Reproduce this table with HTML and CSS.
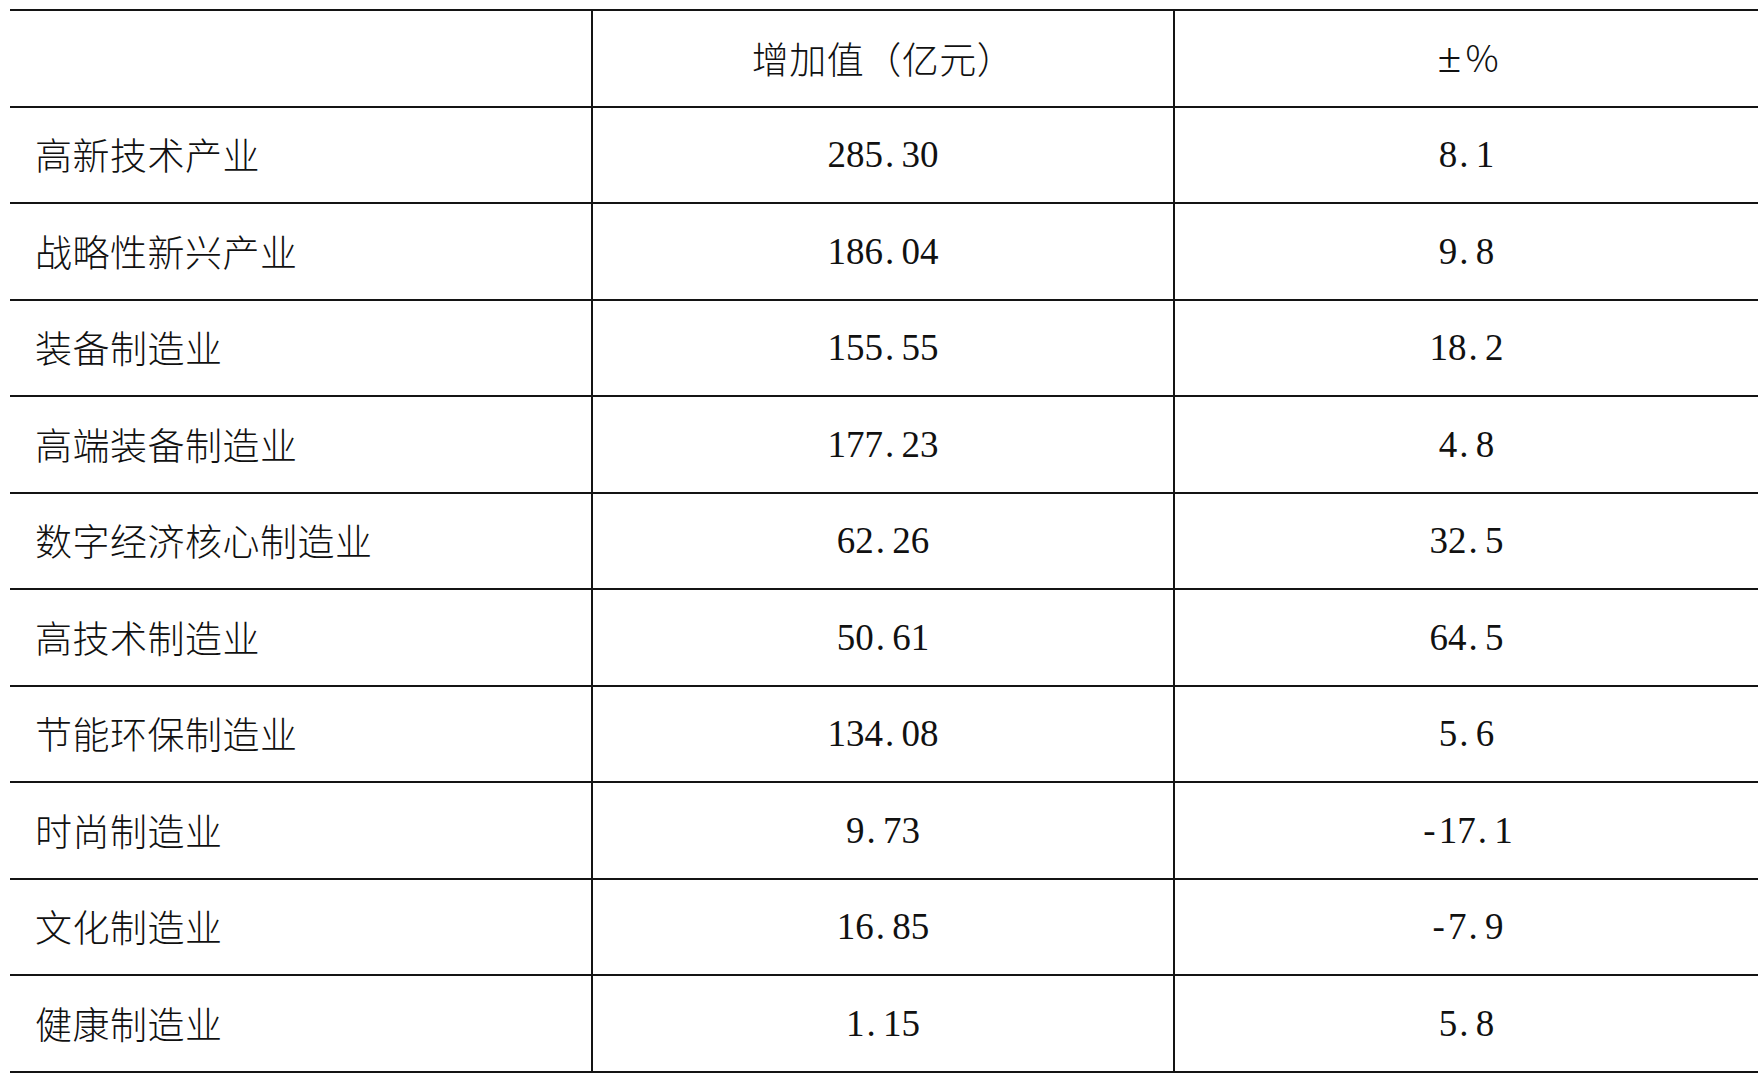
FILE: index.html
```html
<!DOCTYPE html>
<html lang="zh-CN">
<head>
<meta charset="utf-8">
<link rel="stylesheet" href="styles.css">
<title>表</title>
</head>
<body>
<table class="data">
  <thead>
    <tr><th class="name"></th><th>增加值（亿元）</th><th><span class="pm">±</span>%</th></tr>
  </thead>
  <tbody>
    <tr><td class="name">高新技术产业</td><td>285<span class="pt">.</span>30</td><td>8<span class="pt">.</span>1</td></tr>
    <tr><td class="name">战略性新兴产业</td><td>186<span class="pt">.</span>04</td><td>9<span class="pt">.</span>8</td></tr>
    <tr><td class="name">装备制造业</td><td>155<span class="pt">.</span>55</td><td>18<span class="pt">.</span>2</td></tr>
    <tr><td class="name">高端装备制造业</td><td>177<span class="pt">.</span>23</td><td>4<span class="pt">.</span>8</td></tr>
    <tr><td class="name">数字经济核心制造业</td><td>62<span class="pt">.</span>26</td><td>32<span class="pt">.</span>5</td></tr>
    <tr><td class="name">高技术制造业</td><td>50<span class="pt">.</span>61</td><td>64<span class="pt">.</span>5</td></tr>
    <tr><td class="name">节能环保制造业</td><td>134<span class="pt">.</span>08</td><td>5<span class="pt">.</span>6</td></tr>
    <tr><td class="name">时尚制造业</td><td>9<span class="pt">.</span>73</td><td><span class="mn">-</span>17<span class="pt">.</span>1</td></tr>
    <tr><td class="name">文化制造业</td><td>16<span class="pt">.</span>85</td><td><span class="mn">-</span>7<span class="pt">.</span>9</td></tr>
    <tr><td class="name">健康制造业</td><td>1<span class="pt">.</span>15</td><td>5<span class="pt">.</span>8</td></tr>
  </tbody>
</table>
</body>
</html>
```

FILE: styles.css
```css
html, body {
  margin: 0;
  padding: 0;
  background: #ffffff;
}

body {
  padding: 9px 0 0 10px;
  font-family: "Liberation Serif", "Noto Sans CJK SC", serif;
  color: #111111;
}

.data {
  border-collapse: collapse;
  table-layout: fixed;
  width: 1748px;
  font-size: 37px;
  font-weight: 400;
}

.data th,
.data td {
  box-sizing: border-box;
  height: 96.5px;
  padding: 0;
  border-top: 2px solid #141414;
  border-bottom: 2px solid #141414;
  border-left: 2px solid #141414;
  text-align: center;
  vertical-align: middle;
  font-weight: 400;
  line-height: 1;
  white-space: nowrap;
}

.data th:nth-child(1),
.data td:nth-child(1) {
  width: 582px;
}

.data th:nth-child(2),
.data td:nth-child(2) {
  width: 582px;
}

.data th:first-child,
.data td:first-child {
  border-left: none;
}

.data .name {
  text-align: left;
  padding-left: 25px;
  font-family: "Noto Sans CJK SC", sans-serif;
  font-weight: 300;
  letter-spacing: 0.5px;
}

.data th {
  font-family: "Noto Sans CJK SC", sans-serif;
  font-weight: 300;
  letter-spacing: 0.5px;
}

.pt {
  display: inline-block;
  width: 0.5em;
  text-align: left;
  padding-left: 2px;
  box-sizing: border-box;
}

.mn {
  display: inline-block;
  width: 0.5em;
  text-align: center;
}

.pm {
  display: inline-block;
  width: 0.75em;
  font-family: "Liberation Serif", serif;
  font-size: 1.15em;
  text-align: center;
  line-height: 1;
}
```
